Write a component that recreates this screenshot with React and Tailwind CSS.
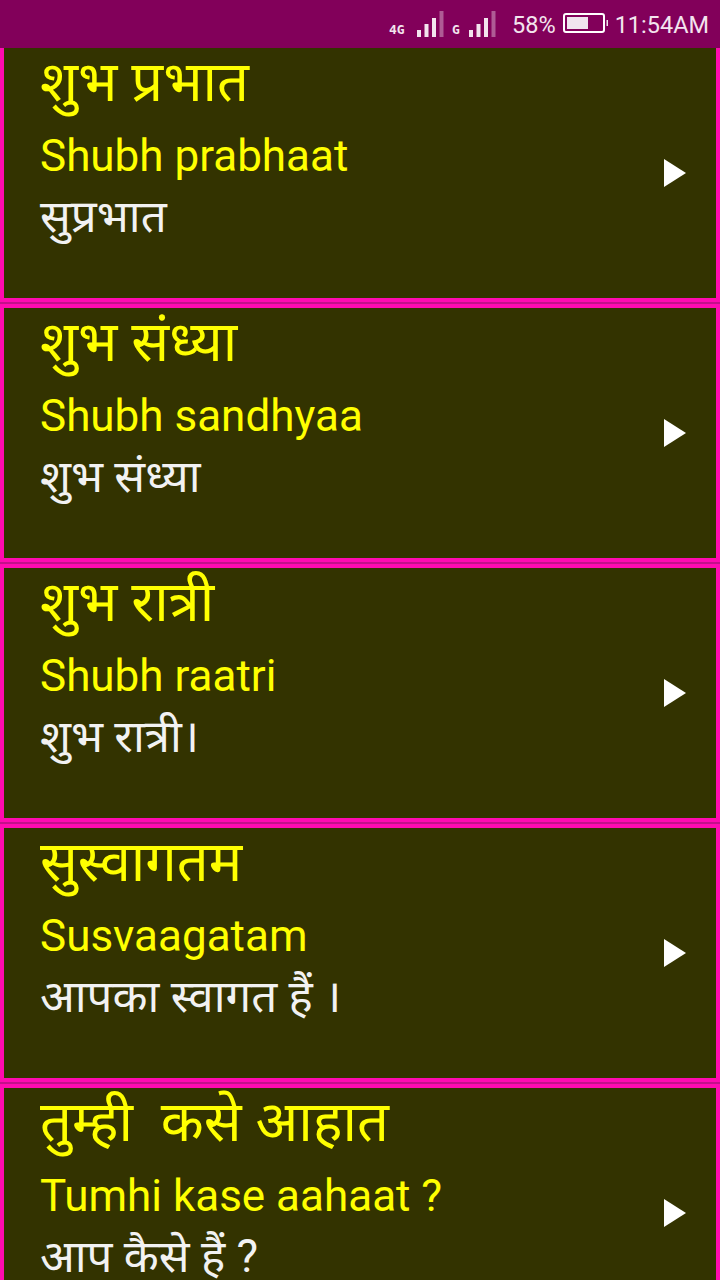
const phrases = [
  { title: 'शुभ प्रभात', roman: 'Shubh prabhaat', meaning: 'सुप्रभात' },
  { title: 'शुभ संध्या', roman: 'Shubh sandhyaa', meaning: 'शुभ संध्या' },
  { title: 'शुभ रात्री', roman: 'Shubh raatri', meaning: 'शुभ रात्री।' },
  { title: 'सुस्वागतम', roman: 'Susvaagatam', meaning: 'आपका स्वागत हैं ।' },
  { title: 'तुम्ही  कसे आहात', roman: 'Tumhi kase aahaat ?', meaning: 'आप कैसे हैं ?' },
]

function Signal() {
  return (
    <svg width="27" height="26" viewBox="0 0 27 26" fill="#f3e4ee" className="mt-[-1px] shrink-0">
      <rect x="0" y="19" width="4" height="7" />
      <rect x="7.5" y="13" width="4" height="13" />
      <rect x="15" y="7" width="4" height="19" />
      <rect x="22.5" y="0" width="4" height="26" fillOpacity="0.4" />
    </svg>
  )
}

function Battery() {
  return (
    <svg width="46" height="20" viewBox="0 0 46 20" className="mt-[-2px] shrink-0">
      <rect x="1" y="1" width="40" height="18" rx="2" fill="none" stroke="#ffffff" strokeWidth="2" />
      <rect x="4" y="4" width="21" height="12" fill="#f0e4ee" />
      <rect x="43.5" y="7" width="1.5" height="6" fill="#f0e4ee" />
    </svg>
  )
}

function StatusBar() {
  return (
    <div className="flex h-12 items-center bg-[#82005a] pl-[389px] font-['Roboto',sans-serif] text-[23.5px] text-[#f3e4ee]">
      <span className="mt-[10px] w-[28px] font-['DejaVu_Sans_Mono',monospace] text-[13px] leading-none font-bold">4G</span>
      <Signal />
      <span className="mt-[10px] ml-[8px] w-[17px] font-['DejaVu_Sans_Mono',monospace] text-[13px] leading-none font-bold">G</span>
      <Signal />
      <span className="mt-[3px] ml-[16px] leading-none">58%</span>
      <div className="ml-[7px] flex"><Battery /></div>
      <span className="mt-[3px] ml-[6px] leading-none">11:54AM</span>
    </div>
  )
}

function PhraseCard({ phrase }) {
  return (
    <div className="flex h-[258px] shrink-0 items-center justify-between border-4 border-[#ff0bb0] bg-[#333300] pr-[30px] pl-9">
      <div className="self-start">
        <p className="h-[69px] text-[56px] leading-[69px] whitespace-pre text-[#ffff00]">{phrase.title}</p>
        <p className="h-[60px] pt-[9px] text-[44px] leading-[60px] text-[#ffff00]">{phrase.roman}</p>
        <p className="h-[64px] pt-[8px] text-[45.6px] leading-[64px] text-[#f2f2f2]">{phrase.meaning}</p>
      </div>
      <svg width="22" height="28" viewBox="0 0 22 28" fill="#ffffff">
        <path d="M0 0 L22 14 L0 28 Z" />
      </svg>
    </div>
  )
}

export default function App() {
  return (
    <div className="h-[1280px] w-[720px] overflow-hidden bg-[#c4108a] font-['Roboto','Noto_Sans',sans-serif]">
      <StatusBar />
      <div className="h-[1232px] overflow-hidden">
        <div className="-mt-1 flex flex-col gap-[2px]">
          {phrases.map(p => (
            <PhraseCard key={p.roman} phrase={p} />
          ))}
        </div>
      </div>
    </div>
  )
}
